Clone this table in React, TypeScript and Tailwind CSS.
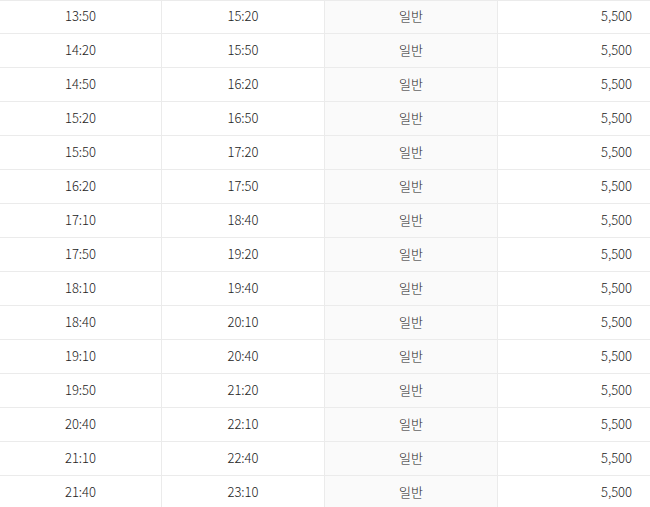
const rows: [string, string][] = [
  ['13:50', '15:20'],
  ['14:20', '15:50'],
  ['14:50', '16:20'],
  ['15:20', '16:50'],
  ['15:50', '17:20'],
  ['16:20', '17:50'],
  ['17:10', '18:40'],
  ['17:50', '19:20'],
  ['18:10', '19:40'],
  ['18:40', '20:10'],
  ['19:10', '20:40'],
  ['19:50', '21:20'],
  ['20:40', '22:10'],
  ['21:10', '22:40'],
  ['21:40', '23:10'],
];

export default function App() {
  return (
    <div
      className="w-[650px] h-[507px] overflow-hidden bg-white text-[13px] font-light text-[#222]"
      style={{ fontFamily: '"Noto Sans CJK KR", sans-serif' }}
    >
      <div className="border-t border-[#ebebeb]">
        {rows.map(([depart, arrive], i) => (
          <div
            key={i}
            className="flex h-[34px] first:h-[33px] border-b border-[#ebebeb] leading-none"
          >
            <div className="w-[162px] flex items-center justify-center border-r border-[#ebebeb] pb-[3px]">
              {depart}
            </div>
            <div className="w-[163px] flex items-center justify-center border-r border-[#ebebeb] pb-[3px]">
              {arrive}
            </div>
            <div className="w-[173px] flex items-center justify-center border-r border-[#ebebeb] bg-[#fafafa] pb-[3px]">
              일반
            </div>
            <div className="flex-1 flex items-center justify-end pr-[18px] pb-[3px]">5,500</div>
          </div>
        ))}
      </div>
    </div>
  );
}
